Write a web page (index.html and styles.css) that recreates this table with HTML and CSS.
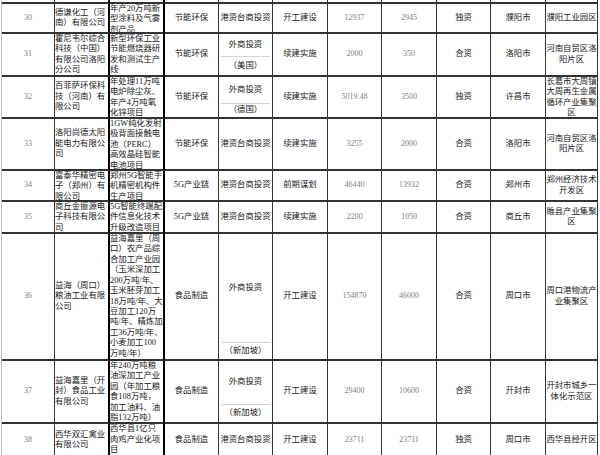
FILE: index.html
```html
<!DOCTYPE html>
<html lang="zh-CN">
<head>
<meta charset="utf-8">
<title>项目表</title>
<link rel="stylesheet" href="styles.css">
</head>
<body>
<div class="sheet">
  <div class="row r29">
    <div class="cell no"></div><div class="cell co"></div><div class="cell pr"></div><div class="cell"></div><div class="cell"></div><div class="cell"></div><div class="cell n"></div><div class="cell n"></div><div class="cell"></div><div class="cell"></div><div class="cell loc"></div>
  </div>
  <div class="row r30">
    <div class="cell no"><span class="t">30</span></div>
    <div class="cell co"><span class="t">德谦化工（河南）有限公司</span></div>
    <div class="cell pr"><span class="t">年产20万吨新型涂料及气雾剂产品</span></div>
    <div class="cell"><span class="t">节能环保</span></div>
    <div class="cell"><span class="t">港资台商投资</span></div>
    <div class="cell"><span class="t">开工建设</span></div>
    <div class="cell n"><span class="t">12937</span></div>
    <div class="cell n"><span class="t">2945</span></div>
    <div class="cell"><span class="t">独资</span></div>
    <div class="cell"><span class="t">濮阳市</span></div>
    <div class="cell loc"><span class="t">濮阳工业园区</span></div>
  </div>
  <div class="row r31">
    <div class="cell no"><span class="t">31</span></div>
    <div class="cell co"><span class="t">霍尼韦尔综合科技（中国）有限公司洛阳分公司</span></div>
    <div class="cell pr"><span class="t">新型环保工业节能燃烧器研发和测试生产线</span></div>
    <div class="cell"><span class="t">节能环保</span></div>
    <div class="cell split s18"><span class="up">外商投资</span><span class="down">（美国）</span></div>
    <div class="cell"><span class="t">续建实施</span></div>
    <div class="cell n"><span class="t">2000</span></div>
    <div class="cell n"><span class="t">350</span></div>
    <div class="cell"><span class="t">合资</span></div>
    <div class="cell"><span class="t">洛阳市</span></div>
    <div class="cell loc"><span class="t">河南自贸区洛阳片区</span></div>
  </div>
  <div class="row r32">
    <div class="cell no"><span class="t">32</span></div>
    <div class="cell co"><span class="t">百菲萨环保科技（河南）有限公司</span></div>
    <div class="cell pr"><span class="t">年处理11万吨电炉除尘灰、年产4万吨氧化锌项目</span></div>
    <div class="cell"><span class="t">节能环保</span></div>
    <div class="cell split s13"><span class="up">外商投资</span><span class="down">（德国）</span></div>
    <div class="cell"><span class="t">续建实施</span></div>
    <div class="cell n"><span class="t">5019.48</span></div>
    <div class="cell n"><span class="t">3500</span></div>
    <div class="cell"><span class="t">独资</span></div>
    <div class="cell"><span class="t">许昌市</span></div>
    <div class="cell loc"><span class="t">长葛市大周镇大周再生金属循环产业集聚区</span></div>
  </div>
  <div class="row r33">
    <div class="cell no"><span class="t">33</span></div>
    <div class="cell co"><span class="t">洛阳尚德太阳能电力有限公司</span></div>
    <div class="cell pr"><span class="t">1GW纯化发射极背面接触电池（PERC）高效晶硅智能电池项目</span></div>
    <div class="cell"><span class="t">节能环保</span></div>
    <div class="cell"><span class="t">港资台商投资</span></div>
    <div class="cell"><span class="t">续建实施</span></div>
    <div class="cell n"><span class="t">3255</span></div>
    <div class="cell n"><span class="t">2000</span></div>
    <div class="cell"><span class="t">合资</span></div>
    <div class="cell"><span class="t">洛阳市</span></div>
    <div class="cell loc"><span class="t">河南自贸区洛阳片区</span></div>
  </div>
  <div class="row r34">
    <div class="cell no"><span class="t">34</span></div>
    <div class="cell co"><span class="t">富泰华精密电子（郑州）有限公司</span></div>
    <div class="cell pr"><span class="t">郑州5G智能手机精密机构件生产项目</span></div>
    <div class="cell"><span class="t">5G产业链</span></div>
    <div class="cell"><span class="t">港资台商投资</span></div>
    <div class="cell"><span class="t">前期谋划</span></div>
    <div class="cell n"><span class="t">46440</span></div>
    <div class="cell n"><span class="t">13932</span></div>
    <div class="cell"><span class="t">合资</span></div>
    <div class="cell"><span class="t">郑州市</span></div>
    <div class="cell loc"><span class="t">郑州经济技术开发区</span></div>
  </div>
  <div class="row r35">
    <div class="cell no"><span class="t">35</span></div>
    <div class="cell co"><span class="t">商丘金振源电子科技有限公司</span></div>
    <div class="cell pr"><span class="t">5G智能终端配件信息化技术升级改造项目</span></div>
    <div class="cell"><span class="t">5G产业链</span></div>
    <div class="cell"><span class="t">港资台商投资</span></div>
    <div class="cell"><span class="t">续建实施</span></div>
    <div class="cell n"><span class="t">2200</span></div>
    <div class="cell n"><span class="t">1050</span></div>
    <div class="cell"><span class="t">合资</span></div>
    <div class="cell"><span class="t">商丘市</span></div>
    <div class="cell loc"><span class="t">睢县产业集聚区</span></div>
  </div>
  <div class="row r36">
    <div class="cell no"><span class="t">36</span></div>
    <div class="cell co"><span class="t">益海（周口）粮油工业有限公司</span></div>
    <div class="cell pr"><span class="t">益海嘉里（周口）农产品综合加工产业园（玉米深加工200万吨/年、玉米胚芽加工18万吨/年、大豆加工120万吨/年、精炼加工36万吨/年、小麦加工100万吨/年）</span></div>
    <div class="cell"><span class="t">食品制造</span></div>
    <div class="cell split s16"><span class="up">外商投资</span><span class="down">（新加坡）</span></div>
    <div class="cell"><span class="t">开工建设</span></div>
    <div class="cell n"><span class="t">154870</span></div>
    <div class="cell n"><span class="t">46000</span></div>
    <div class="cell"><span class="t">合资</span></div>
    <div class="cell"><span class="t">周口市</span></div>
    <div class="cell loc"><span class="t">周口港物流产业集聚区</span></div>
  </div>
  <div class="row r37">
    <div class="cell no"><span class="t">37</span></div>
    <div class="cell co"><span class="t">益海嘉里（开封）食品工业有限公司</span></div>
    <div class="cell pr"><span class="t">年240万吨粮油深加工产业园（年加工粮食108万吨，加工油料、油脂132万吨）</span></div>
    <div class="cell"><span class="t">食品制造</span></div>
    <div class="cell split s17"><span class="up">外商投资</span><span class="down">（新加坡）</span></div>
    <div class="cell"><span class="t">开工建设</span></div>
    <div class="cell n"><span class="t">29400</span></div>
    <div class="cell n"><span class="t">10600</span></div>
    <div class="cell"><span class="t">合资</span></div>
    <div class="cell"><span class="t">开封市</span></div>
    <div class="cell loc"><span class="t">开封市城乡一体化示范区</span></div>
  </div>
  <div class="row r38">
    <div class="cell no"><span class="t">38</span></div>
    <div class="cell co"><span class="t">西华双汇禽业有限公司</span></div>
    <div class="cell pr"><span class="t">西华县1亿只肉鸡产业化项目</span></div>
    <div class="cell"><span class="t">食品制造</span></div>
    <div class="cell"><span class="t">港资台商投资</span></div>
    <div class="cell"><span class="t">开工建设</span></div>
    <div class="cell n"><span class="t">23711</span></div>
    <div class="cell n"><span class="t">23711</span></div>
    <div class="cell"><span class="t">独资</span></div>
    <div class="cell"><span class="t">周口市</span></div>
    <div class="cell loc"><span class="t">西华县经开区</span></div>
  </div>
</div>
</body>
</html>
```

FILE: styles.css
```css
* { box-sizing: border-box; }
html, body { margin: 0; padding: 0; background: #fff; }
body {
  overflow: hidden;
  height: 455px;
  font-family: "Liberation Serif", "Noto Sans CJK SC", serif;
  color: #1a1a1a;
}
.sheet {
  margin-top: -28px;
  margin-left: 1px;
  width: 598px;
  border-left: 1px solid #bbb;
}
.row {
  display: grid;
  grid-template-columns: 53px 55px 55px 54px 54px 55px 54px 55px 54px 55px 52px;
}
.r29 { height: 32px; }
.r30 { height: 30px; }
.r31 { height: 43px; }
.r32 { height: 42px; }
.r33 { height: 52px; }
.r34 { height: 31px; }
.r35 { height: 32px; }
.r36 { height: 127px; }
.r37 { height: 63px; }
.r38 { height: 34px; }

.cell {
  display: flex;
  flex-direction: column;
  overflow: hidden;
  border-right: 1px solid #333;
  border-bottom: 2px solid #333;
  text-align: center;
  font-size: 8.4px;
  line-height: 10.4px;
}
.cell .t { margin: auto 0; }
.no, .n { color: #808080; font-size: 8px; }
.co, .pr {
  text-align: left;
  border-right: 2px solid #000;
}
.split {
  display: grid;
  grid-template-rows: 1fr 17px;
}
.split.s18 { grid-template-rows: 1fr 18px; }
.split.s13 { grid-template-rows: 1fr 13px; }
.split.s16 { grid-template-rows: 1fr 16px; }
.split.s17 { grid-template-rows: 1fr 17px; }
.split .up {
  display: flex;
  align-items: center;
  justify-content: center;
  border-bottom: 1px solid #d4d4d4;
  margin: 0 2px;
}
.split .down {
  display: flex;
  align-items: center;
  justify-content: center;
}
```
